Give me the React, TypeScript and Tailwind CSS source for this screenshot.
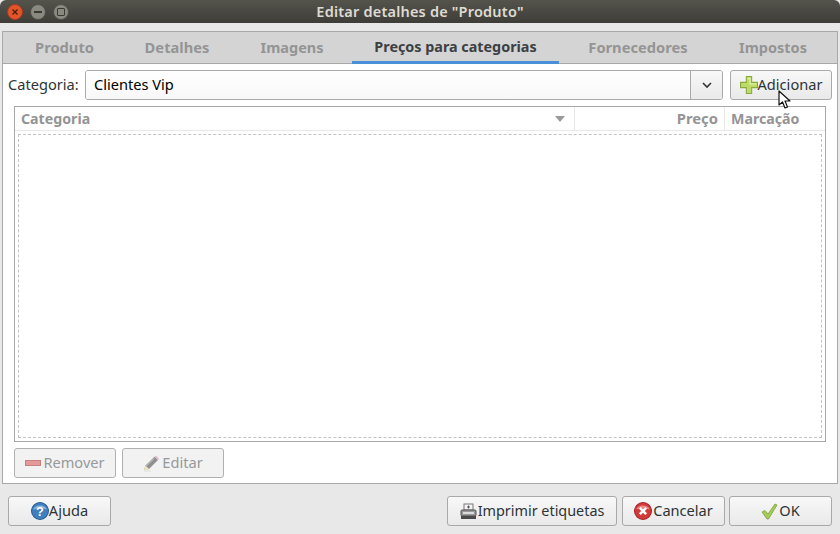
import React from "react";

const btn = "flex items-center justify-center rounded-[3px] border border-[#a9a9a9] bg-gradient-to-b from-[#f8f8f8] to-[#e9e9e9] text-[#2d3436] text-[14.6px] h-[30px]";
const btnOff = "flex items-center justify-center rounded-[3px] border border-[#b0b0b0] bg-[#f2f2f2] text-[#97999b] text-[14.6px] h-[30px]";

const Plus = () => (
  <svg width="18" height="18" viewBox="0 0 17 17">
    <path d="M6 .5h5v5.500h5.500v5H11v5.500H6V11H.5V6H6z" fill="#bcdc66" stroke="#8aa840" strokeWidth="1" />
    <path d="M7 2h3v5h5.500v1H9V3H7z" fill="#e4f3b0" />
  </svg>
);
const Minus = () => (
  <svg width="16" height="6" viewBox="0 0 16 6">
    <rect x="0.5" y="0.5" width="15" height="5" fill="#e59a9a" stroke="#c98080" />
  </svg>
);
const Pencil = () => (
  <svg width="17" height="17" viewBox="0 0 17 17">
    <path d="M1 15 L2.500 10.500 L11.500 1.800 L15 5 L6 14 Z" fill="#8f8f8f" />
    <path d="M11.500 1.800 L13 .8 L16 3.500 L15 5 Z" fill="#e8b4cf" />
    <path d="M1 15.500 L2.500 10.500 L6 14 Z" fill="#f0e8b8" />
    <path d="M3 11 L11 3.500" stroke="#b5b5b5" strokeWidth="1.200" />
    <path d="M1 16h7" stroke="#dcdcdc" strokeWidth="1" />
  </svg>
);
const Help = () => (
  <svg width="18" height="18" viewBox="0 0 17 17">
    <circle cx="8.500" cy="8.500" r="8" fill="#3f7fbf" stroke="#2a5f96" />
    <path d="M2 7a7 6 0 0 1 13 0a12 6 0 0 0-13 0z" fill="#8db8e0" />
    <text x="8.500" y="13" textAnchor="middle" fontSize="12" fontWeight="700" fill="#fff" fontFamily="'Liberation Sans',sans-serif">?</text>
  </svg>
);
const Printer = () => (
  <svg width="17" height="17" viewBox="0 0 17 17">
    <rect x="4" y="1" width="9" height="6" fill="#f4f4f4" stroke="#777" />
    <path d="M8.500 2.500v3M7 4h3" stroke="#555" />
    <rect x="1" y="7" width="15" height="6" rx="1" fill="#9a9a9a" stroke="#555" />
    <rect x="1" y="13" width="15" height="3" fill="#4a4a4a" />
    <rect x="3" y="9" width="11" height="2" fill="#dcdcdc" />
  </svg>
);
const CancelIcon = () => (
  <svg width="18" height="18" viewBox="0 0 17 17">
    <circle cx="8.500" cy="8.500" r="8" fill="#d23a3a" stroke="#a82626" />
    <path d="M2 7a7 6 0 0 1 13 0a12 6 0 0 0-13 0z" fill="#ea8a8a" />
    <path d="M5.500 5.500l6 6M11.500 5.500l-6 6" stroke="#fff" strokeWidth="2.400" />
  </svg>
);
const Check = () => (
  <svg width="17" height="17" viewBox="0 0 17 17">
    <path d="M1 9 L4 7.500 L7 11 L14 1 L16 2 L7.500 16 L6 16 Z" fill="#a5cc55" stroke="#7f9e35" strokeWidth="0.8" />
  </svg>
);
const Cursor = () => (
  <svg width="14" height="20" viewBox="0 0 14 20" className="absolute left-[778px] top-[90px]">
    <path d="M1 1 L1 15 L4.500 12 L7 18 L9.500 17 L7 11 L12 11 Z" fill="#fff" stroke="#111" strokeWidth="1.200" strokeLinejoin="round" />
  </svg>
);

const tabs = [
  { t: "Produto", w: "w-[119px] pl-[4px]", f: "text-[14.700px]" },
  { t: "Detalhes", w: "w-[110px]", f: "text-[14.700px]" },
  { t: "Imagens", w: "w-[120px]", f: "text-[14.500px]" },
  { t: "Preços para categorias", w: "w-[207px]", active: true, f: "text-[14.350px]" },
  { t: "Fornecedores", w: "w-[158px]", f: "text-[14.700px]" },
  { t: "Impostos", w: "w-[112px]", f: "text-[14.500px]" },
];

export default function App() {
  return (
    <div className="relative w-[840px] h-[534px] overflow-hidden flex flex-col bg-[#e8e8e8] text-[14.6px] font-['Noto_Sans',sans-serif]">
      <div className="relative h-[23px] shrink-0 flex items-center justify-center rounded-t-[6px] bg-gradient-to-b from-[#54534c] to-[#3e3d38]">
        <div className="absolute left-[7px] top-[4px] flex gap-[7px]">
          <div className="w-[16px] h-[16px] rounded-full bg-[#e2552a] border border-[#a83c1c] flex items-center justify-center">
            <svg width="8" height="8" viewBox="0 0 8 8"><path d="M1.500 1.500l5 5M6.500 1.500l-5 5" stroke="#4a1d0c" strokeWidth="1.300" /></svg>
          </div>
          <div className="w-[16px] h-[16px] rounded-full bg-[#8a8980] border border-[#4f4e48] flex items-center justify-center">
            <div className="w-[8px] h-[1.500px] bg-[#3a3a35]" />
          </div>
          <div className="w-[16px] h-[16px] rounded-full bg-[#8a8980] border border-[#4f4e48] flex items-center justify-center">
            <div className="w-[8px] h-[8px] border border-[#3a3a35] rounded-[1px]" />
          </div>
        </div>
        <span className="text-[14.500px] font-semibold text-[#dfdbd2] tracking-[0.2px]">Editar detalhes de "Produto"</span>
      </div>

      <div className="mt-[8px] mx-[2px] h-[453px] border border-[#a8a8a8] flex flex-col bg-white">
        <div className="h-[32px] shrink-0 flex bg-[#d4d4d4] border-b border-[#a8a8a8] font-bold text-[#949494]">
          {tabs.map((x) => (
            <div
              key={x.t}
              className={x.active
                ? `${x.w} ${x.f} h-[32px] flex items-center justify-center text-[#3c4043] border-b-[3px] border-[#4a90d9]`
                : `${x.w} ${x.f} flex items-center justify-center`}
            >
              {x.t}
            </div>
          ))}
        </div>

        <div className="flex-1 flex flex-col px-[11px] pt-[6px] pb-[5px]">
          <div className="flex items-center h-[30px] -mx-[6px]">
            <span className="w-[77px] shrink-0 text-[#2d3436]">Categoria:</span>
            <div className="w-[638px] shrink-0 h-[30px] flex rounded-[3px] border border-[#a9a9a9] overflow-hidden">
              <div className="flex-1 flex items-center pl-[8px] text-black bg-gradient-to-b from-[#ffffff] to-[#f8f8f8]">Clientes Vip</div>
              <div className="w-[32px] flex items-center justify-center border-l border-[#a9a9a9] bg-gradient-to-b from-[#f8f8f8] to-[#e9e9e9]">
                <svg width="10" height="7" viewBox="0 0 10 7"><path d="M1 1l4 4 4-4" fill="none" stroke="#333" strokeWidth="1.600" /></svg>
              </div>
            </div>
            <div className={`${btn} shrink-0 ml-[7px] w-[102px]`}><Plus /><span>Adicionar</span></div>
          </div>

          <div className="mt-[6px] w-[812px] h-[336px] border border-[#a8a8a8] flex flex-col">
            <div className="h-[24px] shrink-0 flex items-center border-b border-[#e8e8e8] font-bold text-[14.200px] text-[#949494]">
              <div className="w-[560px] h-full flex items-center justify-between pl-[6px] pr-[9px] border-r border-[#e8e8e8]">
                <span>Categoria</span>
                <svg width="10" height="6" viewBox="0 0 10 6"><path d="M0 0h10L5 6z" fill="#9a9a9a" /></svg>
              </div>
              <div className="w-[150px] h-full flex items-center justify-end pr-[6px] border-r border-[#e8e8e8] text-[14.800px]">Preço</div>
              <div className="flex-1 pl-[6px]">Marcação</div>
            </div>
            <div className="flex-1 mx-[3px] mt-[3px] mb-[3px] border border-dashed border-[#c4c4c4]" />
          </div>

          <div className="mt-[6px] flex gap-[6px]">
            <div className={`${btnOff} w-[102px] gap-[2px]`}><Minus /><span>Remover</span></div>
            <div className={`${btnOff} w-[102px] gap-[2px]`}><Pencil /><span>Editar</span></div>
          </div>
        </div>
      </div>

      <div className="mt-[12px] px-[8px] flex">
        <div className={`${btn} w-[103px]`}><Help /><span>Ajuda</span></div>
        <div className="flex-1" />
        <div className={`${btn} w-[170px] gap-[1px] text-[14.400px]`}><Printer /><span className="text-[14.400px]">Imprimir etiquetas</span></div>
        <div className={`${btn} w-[103px] ml-[5px] gap-[1px]`}><CancelIcon /><span>Cancelar</span></div>
        <div className={`${btn} w-[103px] ml-[4px] gap-[1px]`}><Check /><span>OK</span></div>
      </div>
      <Cursor />
    </div>
  );
}
